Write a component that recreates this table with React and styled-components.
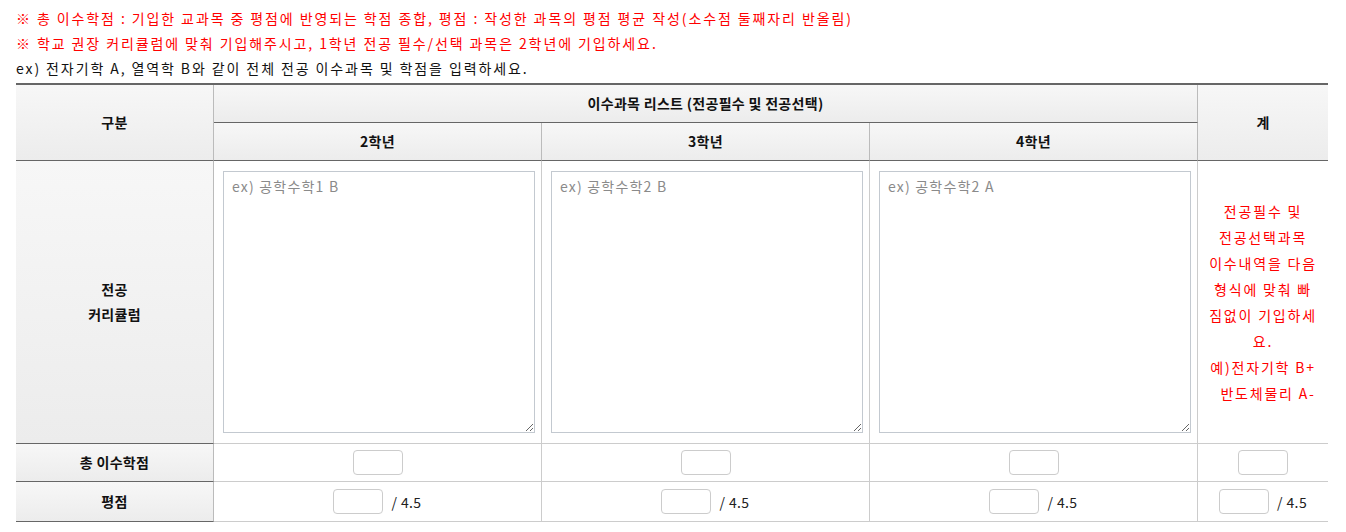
import React from "react";
import styled, { createGlobalStyle } from "styled-components";

const GlobalStyle = createGlobalStyle`
  body {
    margin: 0;
    background: #fff;
    font-family: "Noto Sans CJK KR", "Noto Sans", sans-serif;
    font-size: 14px;
    color: #222;
  }
`;

const Page = styled.div`
  padding: 6px 18px 0 16px;
`;

const Notice = styled.p`
  margin: 0;
  line-height: 25px;
  font-size: 14px;
  letter-spacing: 1.9px;
  color: ${({ red }) => (red ? "#ff0000" : "#111")};
  white-space: nowrap;
`;

const Table = styled.table`
  margin-top: 2px;
  width: 1312px;
  table-layout: fixed;
  border-collapse: separate;
  border-spacing: 0;
  border-top: 2px solid #666;
`;

// header cell (gray gradient)
const Th = styled.th`
  box-sizing: border-box;
  height: ${({ h }) => h || 38}px;
  padding: 0;
  background: linear-gradient(#f7f7f7, #ececec);
  font-weight: 700;
  font-size: 14px;
  letter-spacing: 0.3px;
  color: #111;
  text-align: center;
  vertical-align: middle;
  border-bottom: 1px solid #666;
  border-right: ${({ last }) => (last ? "none" : "1px solid #bbb")};
  line-height: 25px;
`;

const Td = styled.td`
  box-sizing: border-box;
  height: ${({ h }) => h || 38}px;
  padding: ${({ pad }) => pad || "0"};
  text-align: center;
  vertical-align: middle;
  border-bottom: 1px solid #ccc;
  border-right: ${({ last }) => (last ? "none" : "1px solid #ccc")};
`;

const Memo = styled.textarea`
  display: block;
  box-sizing: border-box;
  width: 100%;
  height: 262px;
  padding: 5px 8px;
  border: 1px solid #c3c9d0;
  font-family: "Noto Sans CJK KR", "Noto Sans", sans-serif;
  font-size: 14px;
  letter-spacing: 1.2px;
  line-height: 18px;
  color: #333;
  &::placeholder {
    color: #8a8a8a;
  }
`;

const Guide = styled.div`
  color: #ff0000;
  font-size: 14px;
  letter-spacing: 1.8px;
  line-height: 26px;
  text-align: center;
  white-space: nowrap;
`;

const Indent = styled.span`
  padding-left: 10px;
`;

const ScoreBox = styled.input`
  box-sizing: border-box;
  width: 50px;
  height: 25px;
  border: 1px solid #ccc;
  border-radius: 4px;
  vertical-align: middle;
  margin: 0;
`;

const Field = styled.span`
  display: inline-flex;
  align-items: center;
  gap: 8px;
  font-size: 14px;
  letter-spacing: 0.4px;
  color: #222;
`;

const years = [
  { label: "2학년", ph: "ex) 공학수학1 B" },
  { label: "3학년", ph: "ex) 공학수학2 B" },
  { label: "4학년", ph: "ex) 공학수학2 A" },
];

export default function App() {
  return (
    <Page>
      <GlobalStyle />
      <Notice red>
        ※ 총 이수학점 : 기입한 교과목 중 평점에 반영되는 학점 종합, 평점 : 작성한 과목의 평점 평균 작성(소수점 둘째자리 반올림)
      </Notice>
      <Notice red>
        ※ 학교 권장 커리큘럼에 맞춰 기입해주시고, 1학년 전공 필수/선택 과목은 2학년에 기입하세요.
      </Notice>
      <Notice>ex) 전자기학 A, 열역학 B와 같이 전체 전공 이수과목 및 학점을 입력하세요.</Notice>

      <Table>
        <colgroup>
          <col style={{ width: 198 }} />
          <col style={{ width: 328 }} />
          <col style={{ width: 328 }} />
          <col style={{ width: 328 }} />
          <col style={{ width: 130 }} />
        </colgroup>
        <thead>
          <tr>
            <Th rowSpan={2} h={76}>구분</Th>
            <Th colSpan={3}>이수과목 리스트 (전공필수 및 전공선택)</Th>
            <Th rowSpan={2} h={76} last>계</Th>
          </tr>
          <tr>
            {years.map((y) => (
              <Th key={y.label}>{y.label}</Th>
            ))}
          </tr>
        </thead>
        <tbody>
          <tr>
            <Th h={283}>
              전공
              <br />
              커리큘럼
            </Th>
            {years.map((y) => (
              <Td key={y.label} h={283} pad="10px 6px 10px 9px">
                <Memo placeholder={y.ph} />
              </Td>
            ))}
            <Td h={283} last>
              <Guide>
                전공필수 및<br />
                전공선택과목<br />
                이수내역을 다음<br />
                형식에 맞춰 빠<br />
                짐없이 기입하세<br />
                요.<br />
                예)전자기학 B+<br />
                <Indent>반도체물리 A-</Indent>
              </Guide>
            </Td>
          </tr>
          <tr>
            <Th>총 이수학점</Th>
            {years.map((y) => (
              <Td key={y.label}>
                <ScoreBox type="text" />
              </Td>
            ))}
            <Td last>
              <ScoreBox type="text" />
            </Td>
          </tr>
          <tr>
            <Th h={40}>평점</Th>
            {years.map((y) => (
              <Td key={y.label} h={40}>
                <Field>
                  <ScoreBox type="text" />/ 4.5
                </Field>
              </Td>
            ))}
            <Td h={40} last>
              <Field>
                <ScoreBox type="text" />/ 4.5
              </Field>
            </Td>
          </tr>
        </tbody>
      </Table>
    </Page>
  );
}
